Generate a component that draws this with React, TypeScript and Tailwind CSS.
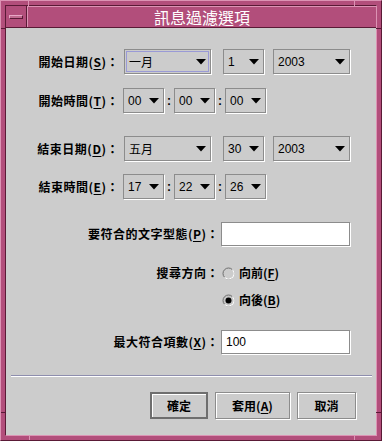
import React from "react";

const cjk = { fontFamily: '"Noto Sans CJK TC", "Liberation Sans", sans-serif' };
const lat = { fontFamily: '"Liberation Sans", "Noto Sans CJK TC", sans-serif' };

function Arrow() {
  return (
    <svg width="10" height="6" viewBox="0 0 10 6" className="shrink-0">
      <polygon points="0,0 10,0 5,5.5" fill="#000" />
    </svg>
  );
}

function Combo({ w, value, focus, cjkText }: { w: string; value: string; focus?: boolean; cjkText?: boolean }) {
  return (
    <div
      className={`${w} h-[25px] flex items-center justify-between pl-[4px] pr-[4px] border border-[#8c8c8c] shadow-[1px_1px_0_#ffffff] bg-[#cccccc] ${
        focus ? "outline outline-1 outline-offset-[-3px] outline-[#9a9ad6]" : ""
      }`}
    >
      <span className="text-[12px] leading-none text-black" style={cjkText ? cjk : lat}>
        {value}
      </span>
      <Arrow />
    </div>
  );
}

function Label({ w, children }: { w: string; children: React.ReactNode }) {
  return (
    <div className={`${w} shrink-0 text-right text-[12px] font-bold leading-none text-black whitespace-nowrap tracking-[0.5px]`} style={cjk}>
      {children}
    </div>
  );
}

function U({ c }: { c: string }) {
  return <span className="underline underline-offset-[2px]">{c}</span>;
}

function Colon() {
  return <span className="w-[10px] text-center text-[12px] font-bold" style={lat}>:</span>;
}

function Radio({ checked }: { checked?: boolean }) {
  return (
    <svg width="13" height="13" viewBox="0 0 13 13" className="shrink-0">
      <circle cx="6.5" cy="6.5" r="5.5" fill={checked ? "#c4c4c4" : "#cccccc"} stroke="#6e6e6e" strokeWidth="1" />
      <path d="M2.6 10.4 A5.5 5.5 0 0 0 10.4 2.6" fill="none" stroke="#ffffff" strokeWidth="1.2" />
      {checked && <circle cx="6.5" cy="6.5" r="3" fill="#000" />}
    </svg>
  );
}

function Button({ w, children, def }: { w: string; children: React.ReactNode; def?: boolean }) {
  return (
    <div
      className={`${w} h-[27px] flex items-center justify-center text-[12px] font-bold text-black bg-[#cccccc] ${
        def
          ? "border-2 border-[#6e6e6e] shadow-[inset_1px_1px_0_#ffffff]"
          : "border border-[#8c8c8c] shadow-[inset_1px_1px_0_#ffffff,1px_1px_0_#ffffff]"
      }`}
      style={cjk}
    >
      {children}
    </div>
  );
}

export default function App() {
  return (
    <div className="relative w-[382px] h-[441px] bg-[#b24e7b] border border-t-[#dc93b4] border-l-[#dc93b4] border-r-[#5a1a36] border-b-[#5a1a36] p-[4px]">
      <div className="absolute left-[27px] top-0 w-px h-[5px] bg-[#dc93b4]" />
      <div className="absolute left-[353px] top-0 w-px h-[5px] bg-[#dc93b4]" />
      <div className="absolute left-[28px] bottom-0 w-px h-[5px] bg-[#dc93b4]" />
      <div className="absolute left-[353px] bottom-0 w-px h-[5px] bg-[#dc93b4]" />
      <div className="absolute left-0 top-[27px] w-[5px] h-px bg-[#5a1a36]" />
      <div className="absolute left-0 top-[411px] w-[5px] h-px bg-[#5a1a36]" />
      <div className="absolute right-0 top-[27px] w-[5px] h-px bg-[#5a1a36]" />
      <div className="absolute right-0 top-[411px] w-[5px] h-px bg-[#5a1a36]" />

      <div className="w-full h-full flex flex-col border border-t-[#5a1a36] border-l-[#5a1a36] border-r-[#dc93b4] border-b-[#dc93b4]">
        <div className="h-[22px] flex border-b border-b-[#5a1a36]">
          <div className="w-[21px] h-full flex items-center justify-center border-r border-r-[#5a1a36]">
            <div className="w-[14px] h-[4px] bg-[#c06a90] border border-t-[#e8a8c6] border-l-[#e8a8c6] border-r-[#5a1a36] border-b-[#5a1a36]" />
          </div>
          <div className="flex-1 h-full flex items-center justify-center border-l border-l-[#dc93b4] border-t border-t-[#dc93b4]">
            <span className="text-white text-[16px] leading-none" style={cjk}>
              訊息過濾選項
            </span>
          </div>
        </div>

        <div className="flex-1 bg-[#cccccc] flex flex-col pt-[21px]">
          <div className="flex items-center h-[25px]">
            <Label w="w-[113px]">
              開始日期(<U c="S" />)：
            </Label>
            <div className="ml-[5px] flex items-center">
              <Combo w="w-[87px]" value="一月" focus cjkText />
              <div className="ml-[12px]"><Combo w="w-[41px]" value="1" /></div>
              <div className="ml-[9px]"><Combo w="w-[77px]" value="2003" /></div>
            </div>
          </div>

          <div className="flex items-center h-[25px] mt-[14px]">
            <Label w="w-[113px]">
              開始時間(<U c="T" />)：
            </Label>
            <div className="ml-[4px] flex items-center">
              <Combo w="w-[41px]" value="00" />
              <Colon />
              <Combo w="w-[41px]" value="00" />
              <Colon />
              <Combo w="w-[41px]" value="00" />
            </div>
          </div>

          <div className="flex items-center h-[25px] mt-[23px]">
            <Label w="w-[113px]">
              結束日期(<U c="D" />)：
            </Label>
            <div className="ml-[5px] flex items-center">
              <Combo w="w-[87px]" value="五月" cjkText />
              <div className="ml-[12px]"><Combo w="w-[41px]" value="30" /></div>
              <div className="ml-[9px]"><Combo w="w-[77px]" value="2003" /></div>
            </div>
          </div>

          <div className="flex items-center h-[25px] mt-[13px]">
            <Label w="w-[113px]">
              結束時間(<U c="E" />)：
            </Label>
            <div className="ml-[4px] flex items-center">
              <Combo w="w-[41px]" value="17" />
              <Colon />
              <Combo w="w-[41px]" value="22" />
              <Colon />
              <Combo w="w-[41px]" value="26" />
            </div>
          </div>

          <div className="flex items-center h-[24px] mt-[23px]">
            <Label w="w-[213px]">
              要符合的文字型態(<U c="P" />)：
            </Label>
            <div className="ml-[2px] w-[129px] h-[24px] bg-white border border-[#8c8c8c] shadow-[1px_1px_0_#ffffff]" />
          </div>

          <div className="flex items-center h-[20px] mt-[17px]">
            <Label w="w-[213px]">搜尋方向：</Label>
            <div className="ml-[3px] flex items-center gap-[4px]">
              <Radio />
              <span className="text-[12px] font-bold leading-none" style={cjk}>
                向前(<U c="F" />)
              </span>
            </div>
          </div>

          <div className="flex items-center h-[20px] mt-[7px]">
            <div className="w-[213px] shrink-0" />
            <div className="ml-[3px] flex items-center gap-[4px]">
              <Radio checked />
              <span className="text-[12px] font-bold leading-none" style={cjk}>
                向後(<U c="B" />)
              </span>
            </div>
          </div>

          <div className="flex items-center h-[24px] mt-[20px]">
            <Label w="w-[213px]">
              最大符合項數(<U c="X" />)：
            </Label>
            <div className="ml-[2px] w-[129px] h-[24px] bg-white border border-[#8c8c8c] shadow-[1px_1px_0_#ffffff] flex items-center pl-[4px]">
              <span className="text-[12px] leading-none" style={lat}>100</span>
            </div>
          </div>

          <div className="mt-[21px] ml-[5px] mr-[4px] h-[2px] border-t border-t-[#8e8eae] border-b border-b-[#ffffff]" />

          <div className="mt-[15px] flex justify-end pr-[20px] gap-[7px]">
            <Button w="w-[58px]" def>確定</Button>
            <Button w="w-[75px]">
              套用(<U c="A" />)
            </Button>
            <Button w="w-[59px]">取消</Button>
          </div>
        </div>
      </div>
    </div>
  );
}
